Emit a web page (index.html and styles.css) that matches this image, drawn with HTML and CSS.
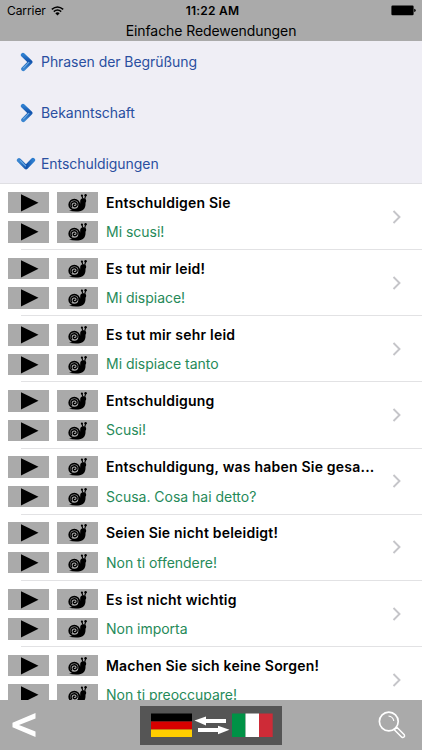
FILE: index.html
```
<!DOCTYPE html>
<html lang="de">
<head>
<meta charset="utf-8">
<title>Einfache Redewendungen</title>
<link rel="stylesheet" href="styles.css">
</head>
<body>
<svg class="defs" aria-hidden="true">
  <defs>
    <linearGradient id="blue" x1="0" y1="0" x2="0" y2="1">
      <stop offset="0" stop-color="#2f7fd0"/><stop offset=".45" stop-color="#1152ac"/><stop offset="1" stop-color="#3c86d0"/>
    </linearGradient>
    <symbol id="chev" viewBox="0 0 14 20">
      <path d="M3 3 10.3 10 3.3 17" fill="none" stroke="url(#blue)" stroke-width="4.300" stroke-linecap="round" stroke-linejoin="round"/>
      <path d="M3.6 15.6 8.8 10.4" fill="none" stroke="#6aaae4" stroke-width="1.200" stroke-linecap="round"/>
    </symbol>
    <symbol id="play" viewBox="0 0 41 21"><path d="M13 2 30.500 10.500 13 19.200Z"/></symbol>
    <symbol id="snail" viewBox="0 0 41 21">
      <path d="M12 18.500C17 19.500 23 19.600 25.500 18C28.400 16.300 28.600 13 28.500 10.500C30 8.400 29 6 26.400 6C24 6 23 7.500 23.200 10C23.300 13 22 15 20 16.500Z"/>
      <path d="M25.700 6.500 25 3.300M27.800 6.500 28.600 3.300" fill="none" stroke="#000" stroke-width="1.100"/>
      <circle cx="24.900" cy="3.300" r="1.100"/><circle cx="28.600" cy="3" r="1.200"/>
      <circle cx="17.300" cy="12.400" r="5" fill="#aaa" stroke="#000" stroke-width="1.900"/>
      <path d="M14.700 15.200C12.800 11.500 15 9.300 17.800 9.500C20.500 9.800 20.900 13 19 14.100C17.400 15 15.600 13.800 16.400 12.500C16.800 11.800 17.800 11.900 18 12.500" fill="none" stroke="#000" stroke-width="1.400"/>
    </symbol>
    <symbol id="more" viewBox="0 0 10 14"><path d="M1.500 1 7.500 7 1.500 13" fill="none" stroke="#c5c5c9" stroke-width="1.900"/></symbol>
  </defs>
</svg>
<div class="app">
  <header class="top">
    <div class="status">
      <div class="carrier"><span>Carrier</span>
        <svg width="13" height="10" viewBox="0 0 13 10"><path d="M.8 3.4Q6.500-1.500 12.200 3.400M2.800 5.600Q6.500 2.400 10.200 5.600" fill="none" stroke="#000" stroke-width="1.500"/><path d="M4.300 7.200Q6.500 5.300 8.700 7.200L6.500 9.500Z"/></svg>
      </div>
      <div class="time">11:22 AM</div>
      <svg class="battery" width="25" height="11" viewBox="0 0 25 11"><rect x=".4" y=".6" width="22.200" height="9.600" rx="1.200"/><path d="M23.200 3.800q1.500.3 1.500 1.600t-1.500 1.600z"/></svg>
    </div>
    <h1 class="title">Einfache Redewendungen</h1>
  </header>
  <nav class="sections">
    <div class="section"><svg class="chev"><use href="#chev"/></svg><span>Phrasen der Begrüßung</span></div>
    <div class="section"><svg class="chev"><use href="#chev"/></svg><span>Bekanntschaft</span></div>
    <div class="section"><svg class="chev open"><use href="#chev"/></svg><span>Entschuldigungen</span></div>
  </nav>
  <main class="list" id="list"></main>
  <footer class="bottom">
    <svg class="back" width="24" height="26" viewBox="0 0 24 26"><path d="M23.500 1V6.400L7 13 23.500 19.600V25L.5 15.200V10.800Z" fill="#fff"/></svg>
    <div class="langs">
      <svg width="142" height="39" viewBox="0 0 142 39">
        <path fill="#000" d="M11 7.500h41v8H11z"/><path fill="#d80000" d="M11 15.500h41v8H11z"/><path fill="#ffce00" d="M11 23.500h41v7.500H11z"/>
        <path fill="#fff" d="M54.500 14.500 66 10.500V13H86v4H66v2.500zM89.500 23.700 78 19.700V22H58v4h20v2.200z"/>
        <path fill="#009246" d="M92 7.500h13.500V31H92z"/><path fill="#fff" d="M105.500 7.500h13.500V31h-13.500z"/><path fill="#ce2b37" d="M119 7.500h13.700V31H119z"/>
      </svg>
    </div>
    <svg class="search" width="28" height="28" viewBox="0 0 28 28" fill="none" stroke="#fff"><circle cx="10.800" cy="10.500" r="9.400" stroke-width="1.700"/><path d="M10.500 5Q15 5.500 15.800 10" stroke-width="1.100"/><path d="M16.300 18.800 18.800 16.300 26.300 23.800Q27 25 26 26T23.800 26.200Z" stroke-width="1.500" stroke-linejoin="round"/></svg>
  </footer>
</div>
<script src="app.js"></script>
</body>
</html>
```
FILE: styles.css
```
* { box-sizing: border-box; }
body { margin: 0; font-family: Inter, "Liberation Sans", sans-serif; background: #fff; color: #000; }
svg { display: block; flex: none; }
.defs { position: absolute; width: 0; height: 0; }
.app { width: 422px; height: 750px; display: flex; flex-direction: column; overflow: hidden; }
.top { flex: none; height: 41px; background: #aaa; }
.status { height: 21px; padding: 0 6px 0 7px; display: grid; grid-template-columns: 1fr auto 1fr; align-items: center; font-size: 12px; }
.carrier { display: flex; align-items: center; gap: 5px; letter-spacing: -.08px; }
.time { font-weight: 600; letter-spacing: .25px; padding-left: 2px; }
.battery { justify-self: end; }
.title { margin: 0; font-size: 14px; line-height: 20px; font-weight: 400; text-align: center; letter-spacing: -.08px; }
.sections { flex: none; height: 143px; display: flex; flex-direction: column; gap: 10px; background: #efeef5; border-bottom: 1px solid #dfdfe3; }
.section { height: 41px; flex: none; padding-left: 20px; display: flex; align-items: center; gap: 7px; font-size: 14px; letter-spacing: -.06px; color: #2a4fa0; }
.chev { width: 14px; height: 20px; }
.chev.open { transform: translateX(-1px) rotate(90deg); }
.list { flex: 1; min-height: 0; overflow: hidden; background: #fff; }
.row { height: 66.17px; padding: 7.700px 17px 0 8px; display: flex; position: relative; }
.row::after { content: ""; position: absolute; left: 21px; right: 0; bottom: 0; height: 1px; background: #e2e2e4; }
.controls { display: grid; grid-template-columns: 41px 41px; grid-template-rows: 21.500px 21.500px; gap: 8px; }
.btn { width: 41px; height: 21.500px; background: #aaa; }
.texts { margin-left: 8px; flex: 1; min-width: 0; line-height: 21px; font-size: 14px; white-space: nowrap; }
.de { font-weight: 600; letter-spacing: .21px; }
.it { margin-top: 8.300px; color: #268a59; letter-spacing: -.02px; }
.more { width: 10px; height: 14px; margin: 18px 3px 0 0; }
.bottom { flex: none; height: 50px; background: #aaa; padding: 0 16px 0 12px; display: flex; align-items: center; justify-content: space-between; }
.langs { width: 142px; height: 39px; background: #555; margin-left: 7px; }
```
FILE: app.js
```
const phrases = [
  ["Entschuldigen Sie", "Mi scusi!"],
  ["Es tut mir leid!", "Mi dispiace!"],
  ["Es tut mir sehr leid", "Mi dispiace tanto"],
  ["Entschuldigung", "Scusi!"],
  ["Entschuldigung, was haben Sie gesa...", "Scusa. Cosa hai detto?"],
  ["Seien Sie nicht beleidigt!", "Non ti offendere!"],
  ["Es ist nicht wichtig", "Non importa"],
  ["Machen Sie sich keine Sorgen!", "Non ti preoccupare!"]
];
const icon = (name, cls) => `<svg class="${cls}"><use href="#${name}"/></svg>`;
const pair = icon("play", "btn") + icon("snail", "btn");
document.getElementById("list").innerHTML = phrases.map(([de, it]) =>
  `<div class="row"><div class="controls">${pair}${pair}</div><div class="texts"><div class="de">${de}</div><div class="it">${it}</div></div>${icon("more", "more")}</div>`
).join("");
```
